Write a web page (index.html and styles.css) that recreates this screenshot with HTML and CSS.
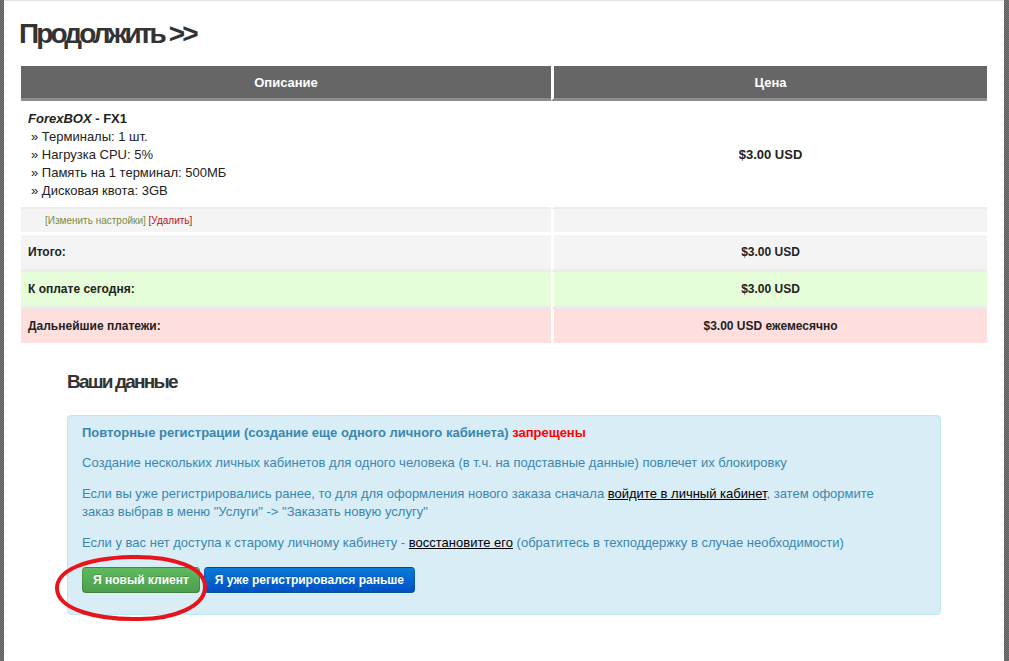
FILE: index.html
```html
<!DOCTYPE html>
<html lang="ru">
<head>
<meta charset="utf-8">
<title>Продолжить</title>
<link rel="stylesheet" href="styles.css">
</head>
<body>
<div class="page">
  <h1 class="title">Продолжить &gt;&gt;</h1>
  <table class="cart">
    <thead>
      <tr><th class="col-desc">Описание</th><th class="col-price">Цена</th></tr>
    </thead>
    <tbody>
      <tr class="item">
        <td>
          <div class="product"><em>ForexBOX</em> - FX1</div>
          <div class="opt">» Терминалы: 1 шт.</div>
          <div class="opt">» Нагрузка CPU: 5%</div>
          <div class="opt">» Память на 1 терминал: 500МБ</div>
          <div class="opt">» Дисковая квота: 3GB</div>
        </td>
        <td class="price">$3.00 USD</td>
      </tr>
      <tr class="links">
        <td><a class="edit" href="#">[Изменить настройки]</a> <a class="remove" href="#">[Удалить]</a></td>
        <td></td>
      </tr>
      <tr class="total grey">
        <td>Итого:</td><td class="sum">$3.00 USD</td>
      </tr>
      <tr class="total green">
        <td>К оплате сегодня:</td><td class="sum">$3.00 USD</td>
      </tr>
      <tr class="total red">
        <td>Дальнейшие платежи:</td><td class="sum">$3.00 USD ежемесячно</td>
      </tr>
    </tbody>
  </table>

  <div class="details">
    <h2 class="subtitle">Ваши данные</h2>
    <div class="alert">
      <p class="first"><strong>Повторные регистрации (создание еще одного личного кабинета) <span class="forbidden">запрещены</span></strong></p>
      <p>Создание нескольких личных кабинетов для одного человека (в т.ч. на подставные данные) повлечет их блокировку</p>
      <p>Если вы уже регистрировались ранее, то для для оформления нового заказа сначала <a href="#">войдите в личный кабинет</a>, затем оформите заказ выбрав в меню "Услуги" -&gt; "Заказать новую услугу"</p>
      <p>Если у вас нет доступа к старому личному кабинету - <a href="#">восстановите его</a> (обратитесь в техподдержку в случае необходимости)</p>
      <div class="buttons">
        <span class="btn-wrap">
          <a class="btn btn-success" href="#">Я новый клиент</a>
          <svg class="circle" width="160" height="70" viewBox="0 0 160 70" aria-hidden="true">
            <path d="M78 4 C120 3 152 14 152 34 C152 53 122 66 86 66 C46 67 5 57 4 36 C3 17 34 5 78 4 Z" fill="none" stroke="#e8141c" stroke-width="4"/>
          </svg>
        </span>
        <a class="btn btn-primary" href="#">Я уже регистрировался раньше</a>
      </div>
    </div>
  </div>
</div>
</body>
</html>
```

FILE: styles.css
```css
html, body {
  margin: 0;
  padding: 0;
}
body {
  background: repeating-conic-gradient(#5c5c5c 0 25%, #7a7a7a 0 50%) 0 0 / 2px 2px;
  font-family: "Liberation Sans", Arial, sans-serif;
  color: #333;
}
.page {
  background: #fff;
  margin: 0 5px 0 4px;
  min-height: 661px;
  box-sizing: border-box;
  padding: 1px 17px 20px 17px;
  border-top: 1px solid #e4e4e4;
}
.title {
  margin: 16px 0 0 -2px;
  font-size: 28px;
  line-height: 32px;
  font-weight: bold;
  letter-spacing: -2.9px;
  color: #333;
}
.cart {
  width: 100%;
  margin-top: 16px;
  border-collapse: separate;
  border-spacing: 0;
  font-size: 13px;
}
.cart th {
  background: #666;
  color: #fff;
  font-weight: bold;
  font-size: 13px;
  height: 32px;
  padding: 0;
  border-bottom: 3px solid #8c8c8c;
  text-align: center;
}
.cart .col-desc { width: 530px; }
.cart th + th,
.cart td + td {
  border-left: 3px solid #fff;
}
.cart td {
  padding: 0 7px;
  border-bottom: 3px solid #ececec;
}
.item td {
  background: #fff;
  padding: 9px 7px 7px 7px;
  line-height: 18px;
  color: #222;
  border-bottom: 2px solid #ececec;
}
.product { font-weight: bold; }
.product em { font-weight: bold; font-style: italic; }
.opt { padding-left: 3px; }
.item .price {
  text-align: center;
  font-weight: bold;
}
.links td {
  background: #f4f4f4;
  height: 23px;
  padding: 0 0 0 24px;
  font-size: 10px;
  border-bottom: 3px solid #fff;
}
.links a { text-decoration: none; }
.edit { color: #7b8b3b; }
.remove { color: #b5122a; }
.total td {
  height: 34px;
  padding: 0 7px;
  font-size: 12px;
  font-weight: bold;
  color: #222;
}
.total .sum { text-align: center; }
.grey td { background: #f4f4f4; }
.green td { background: #e5fdd8; }
.red td { background: #ffdede; border-bottom: none; }

.details {
  margin: 0 46px;
}
.subtitle {
  margin: 26px 0 0 0;
  font-size: 19px;
  line-height: 26px;
  font-weight: bold;
  letter-spacing: -1.8px;
  color: #333;
}
.alert {
  margin-top: 20px;
  background: #d9edf7;
  border: 1px solid #bce8f1;
  border-radius: 4px;
  padding: 8px 35px 21px 14px;
  color: #3a87ad;
  font-size: 13px;
  line-height: 18px;
}
.alert p {
  margin: 0 0 13px 0;
}
.alert p.first { margin-bottom: 12px; }
.alert a {
  color: #000;
  text-decoration: underline;
}
.forbidden { color: #ff0000; }
.buttons {
  margin-top: 15px;
  display: flex;
  gap: 4px;
}
.btn-wrap {
  position: relative;
  display: flex;
}
.btn {
  display: inline-block;
  height: 26px;
  line-height: 24px;
  box-sizing: border-box;
  padding: 0 10px;
  font-size: 12px;
  font-weight: bold;
  white-space: nowrap;
  color: #fff !important;
  text-decoration: none !important;
  border-radius: 4px;
  border: 1px solid rgba(0,0,0,0.15);
  border-bottom-color: rgba(0,0,0,0.3);
  text-shadow: 0 -1px 0 rgba(0,0,0,0.2);
  text-align: center;
}
.btn-success {
  background: linear-gradient(#5fbb5f, #4c9f4c);
}
.btn-primary {
  background: linear-gradient(#0a7bd6, #0050c6);
}
.circle {
  position: absolute;
  left: -29px;
  top: -14px;
  pointer-events: none;
}
```
